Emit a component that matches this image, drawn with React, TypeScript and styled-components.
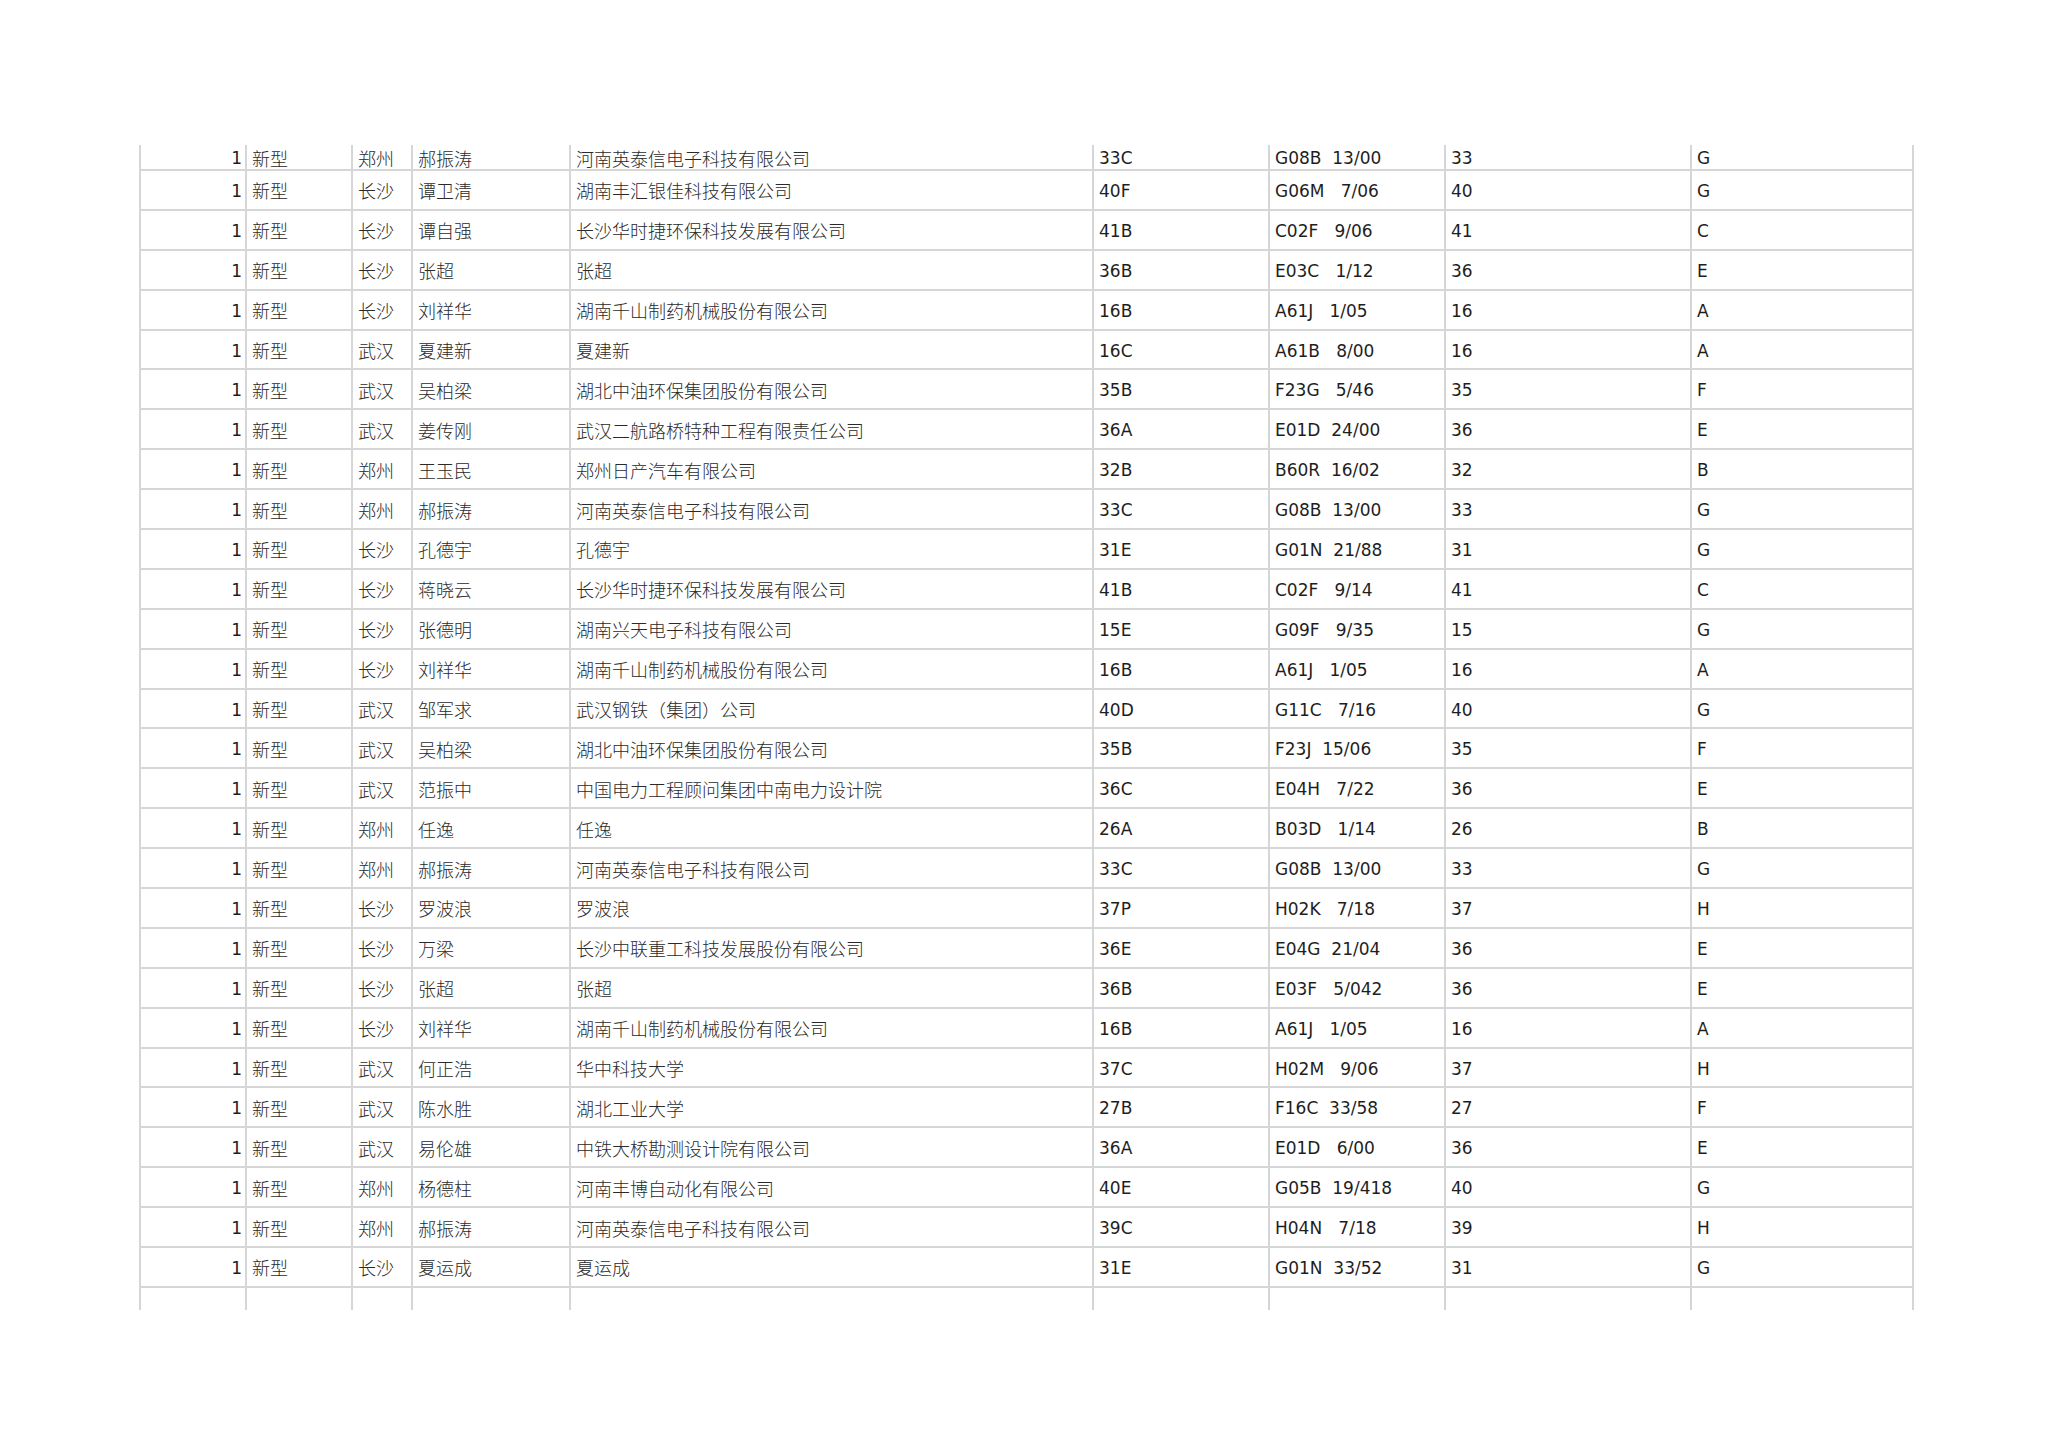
import React from "react";
import styled, { createGlobalStyle } from "styled-components";

const GlobalStyle = createGlobalStyle`
  html, body {
    margin: 0;
    padding: 0;
    background: #ffffff;
  }
  body {
    font-family: "DejaVu Sans", "Noto Sans CJK SC", sans-serif;
    color: #1e1e1e;
  }
`;

const LINE = "#d6d6d6";
const COLUMNS = "108px 106px 60px 158px 523px 176px 176px 246px 222px";

const Page = styled.div`
  padding: 145px 0 0 139px;
  min-height: 1447px;
  box-sizing: border-box;
`;

const Sheet = styled.div`
  display: flex;
  flex-direction: column;
  width: 1775px;
`;

type RowKind = "head" | "body" | "tail";

const Row = styled.div<{ $kind: RowKind }>`
  display: grid;
  grid-template-columns: ${COLUMNS};
  box-sizing: border-box;
  height: ${(p) => (p.$kind === "body" ? "39.9px" : "24px")};
  border-top: ${(p) => (p.$kind === "head" ? "none" : `2px solid ${LINE}`)};
`;

type Script = "cjk" | "latin";

const Cell = styled.div<{ $align?: "left" | "right"; $script?: Script }>`
  box-sizing: border-box;
  display: flex;
  align-items: center;
  justify-content: ${(p) => (p.$align === "right" ? "flex-end" : "flex-start")};
  padding: ${(p) =>
    p.$align === "right"
      ? "2px 3px 0 0"
      : p.$script === "cjk"
      ? "1px 0 0 5px"
      : "2px 0 0 5px"};
  border-right: 2px solid ${LINE};
  font-family: ${(p) =>
    p.$script === "cjk"
      ? `"Noto Sans CJK SC", "DejaVu Sans", sans-serif`
      : `"DejaVu Sans", "Noto Sans CJK SC", sans-serif`};
  font-size: ${(p) => (p.$script === "cjk" ? "18px" : "17px")};
  font-weight: ${(p) => (p.$script === "cjk" ? 300 : 400)};
  color: ${(p) => (p.$script === "cjk" ? "#2a2a2a" : "#1e1e1e")};
  line-height: 22px;
  white-space: pre;
  overflow: hidden;

  &:first-child {
    border-left: 2px solid ${LINE};
  }
`;

type Rec = [string, string, string, string, string, string, string];

const rows: Rec[] = [
  ["郑州", "郝振涛", "河南英泰信电子科技有限公司", "33C", "G08B  13/00", "33", "G"],
  ["长沙", "谭卫清", "湖南丰汇银佳科技有限公司", "40F", "G06M   7/06", "40", "G"],
  ["长沙", "谭自强", "长沙华时捷环保科技发展有限公司", "41B", "C02F   9/06", "41", "C"],
  ["长沙", "张超", "张超", "36B", "E03C   1/12", "36", "E"],
  ["长沙", "刘祥华", "湖南千山制药机械股份有限公司", "16B", "A61J   1/05", "16", "A"],
  ["武汉", "夏建新", "夏建新", "16C", "A61B   8/00", "16", "A"],
  ["武汉", "吴柏梁", "湖北中油环保集团股份有限公司", "35B", "F23G   5/46", "35", "F"],
  ["武汉", "姜传刚", "武汉二航路桥特种工程有限责任公司", "36A", "E01D  24/00", "36", "E"],
  ["郑州", "王玉民", "郑州日产汽车有限公司", "32B", "B60R  16/02", "32", "B"],
  ["郑州", "郝振涛", "河南英泰信电子科技有限公司", "33C", "G08B  13/00", "33", "G"],
  ["长沙", "孔德宇", "孔德宇", "31E", "G01N  21/88", "31", "G"],
  ["长沙", "蒋晓云", "长沙华时捷环保科技发展有限公司", "41B", "C02F   9/14", "41", "C"],
  ["长沙", "张德明", "湖南兴天电子科技有限公司", "15E", "G09F   9/35", "15", "G"],
  ["长沙", "刘祥华", "湖南千山制药机械股份有限公司", "16B", "A61J   1/05", "16", "A"],
  ["武汉", "邹军求", "武汉钢铁（集团）公司", "40D", "G11C   7/16", "40", "G"],
  ["武汉", "吴柏梁", "湖北中油环保集团股份有限公司", "35B", "F23J  15/06", "35", "F"],
  ["武汉", "范振中", "中国电力工程顾问集团中南电力设计院", "36C", "E04H   7/22", "36", "E"],
  ["郑州", "任逸", "任逸", "26A", "B03D   1/14", "26", "B"],
  ["郑州", "郝振涛", "河南英泰信电子科技有限公司", "33C", "G08B  13/00", "33", "G"],
  ["长沙", "罗波浪", "罗波浪", "37P", "H02K   7/18", "37", "H"],
  ["长沙", "万梁", "长沙中联重工科技发展股份有限公司", "36E", "E04G  21/04", "36", "E"],
  ["长沙", "张超", "张超", "36B", "E03F   5/042", "36", "E"],
  ["长沙", "刘祥华", "湖南千山制药机械股份有限公司", "16B", "A61J   1/05", "16", "A"],
  ["武汉", "何正浩", "华中科技大学", "37C", "H02M   9/06", "37", "H"],
  ["武汉", "陈水胜", "湖北工业大学", "27B", "F16C  33/58", "27", "F"],
  ["武汉", "易伦雄", "中铁大桥勘测设计院有限公司", "36A", "E01D   6/00", "36", "E"],
  ["郑州", "杨德柱", "河南丰博自动化有限公司", "40E", "G05B  19/418", "40", "G"],
  ["郑州", "郝振涛", "河南英泰信电子科技有限公司", "39C", "H04N   7/18", "39", "H"],
  ["长沙", "夏运成", "夏运成", "31E", "G01N  33/52", "31", "G"],
];

const scripts: Script[] = ["cjk", "cjk", "cjk", "latin", "latin", "latin", "latin"];

export default function App() {
  return (
    <>
      <GlobalStyle />
      <Page>
        <Sheet>
          {rows.map((r, i) => (
            <Row key={i} $kind={i === 0 ? "head" : "body"}>
              <Cell $align="right" $script="latin">1</Cell>
              <Cell $script="cjk">新型</Cell>
              {r.map((v, j) => (
                <Cell key={j} $script={scripts[j]}>{v}</Cell>
              ))}
            </Row>
          ))}
          <Row $kind="tail">
            {Array.from({ length: 9 }).map((_, j) => (
              <Cell key={j} />
            ))}
          </Row>
        </Sheet>
      </Page>
    </>
  );
}
